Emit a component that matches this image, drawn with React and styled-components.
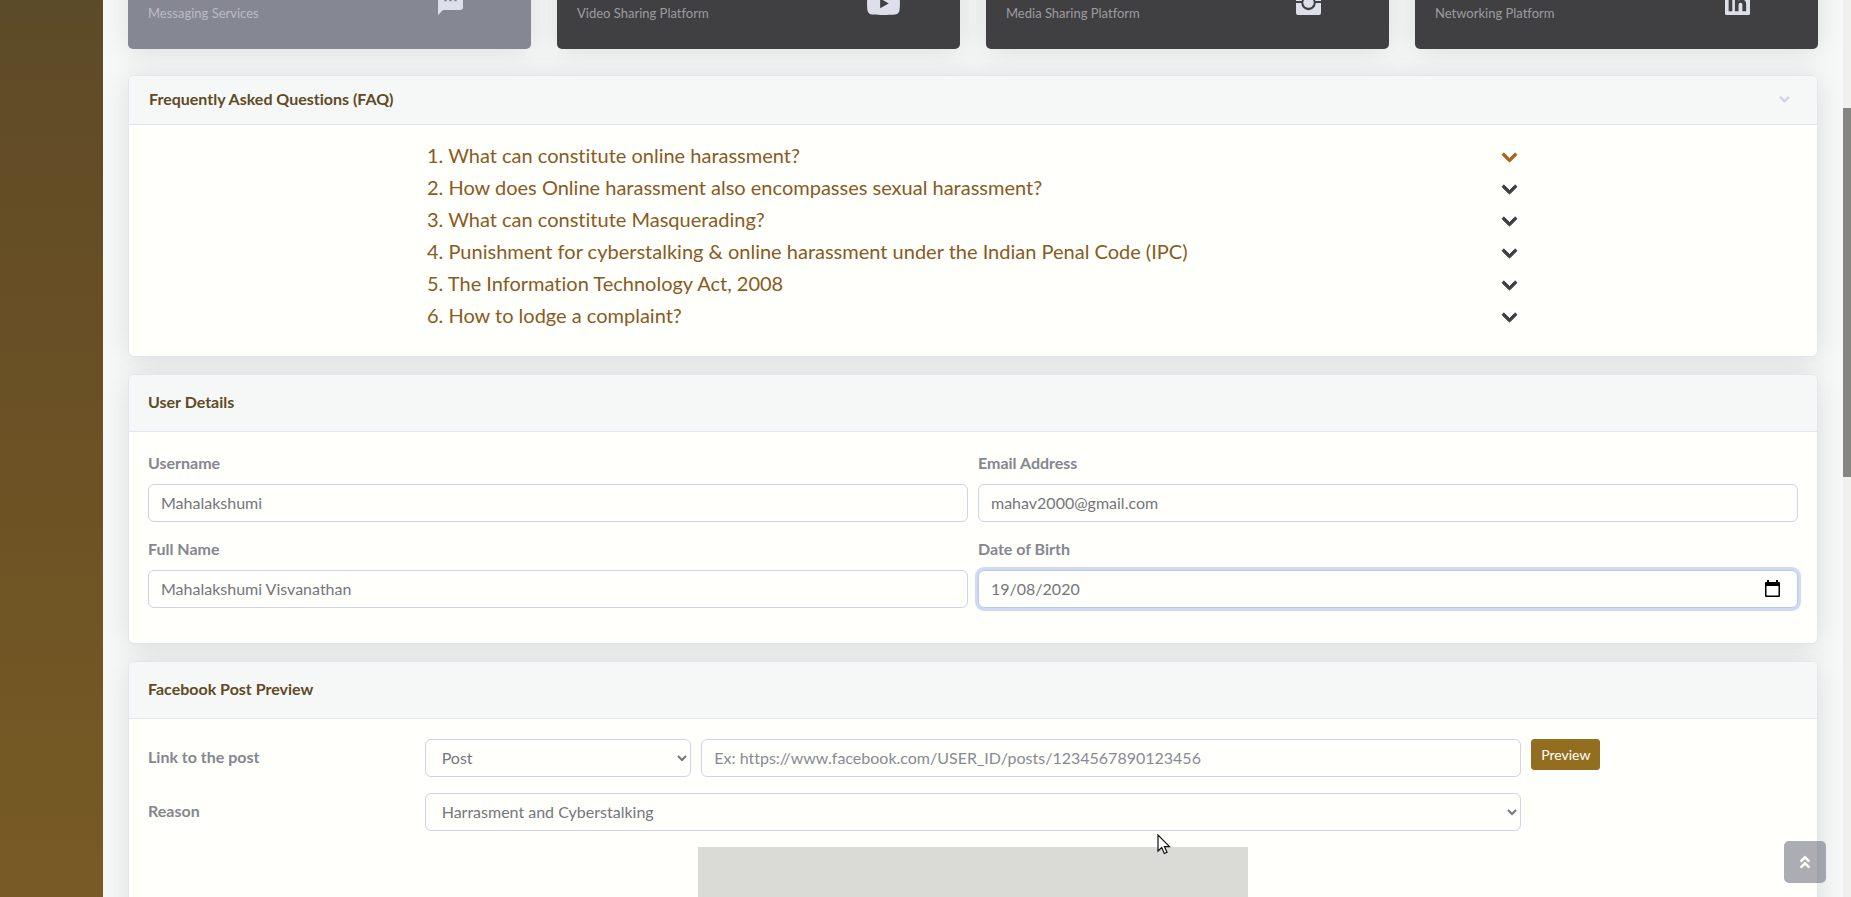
import React from "react";
import styled, { createGlobalStyle } from "styled-components";
import { FaChevronDown, FaAngleDoubleUp, FaYoutube } from "react-icons/fa";
import { MdSms } from "react-icons/md";

const GlobalStyle = createGlobalStyle`
  *, *::before, *::after { box-sizing: border-box; }
  body {
    margin: 0;
    overflow: hidden;
    background: #f7f9f9;
    font-family: Lato, "Liberation Sans", sans-serif;
    font-size: 16px;
    line-height: 24px;
    font-variant-ligatures: none;
    color: #858796;
  }
  button, input, select { font: inherit; }
`;

const Shell = styled.div`
  display: flex;
  height: 100vh;
  overflow: hidden;
`;

const Sidebar = styled.aside`
  flex: 0 0 103px;
  background: linear-gradient(180deg, #5c4b29 0%, #644c25 20%, #785b24 100%);
`;

const Main = styled.main`
  flex: 1;
  min-width: 0;
  padding: 0 25px;
  overflow: hidden;
`;

const Track = styled.div`
  flex: 0 0 8px;
  padding-top: 108px;
  background: #f0f0ec;
`;

const Thumb = styled.div`
  height: 369px;
  background: #868681;
`;

const shadow = "0 2px 28px rgba(58, 59, 62, 0.15)";

const Platforms = styled.section`
  display: grid;
  grid-template-columns: repeat(4, 1fr);
  gap: 26px;
  margin: -63px 0 26px;
`;

const Platform = styled.article`
  display: flex;
  align-items: flex-end;
  justify-content: space-between;
  height: 112px;
  padding: 0 57px 26px 20px;
  border-radius: 5px;
  color: #fffffb;
  background: ${(p) => (p.$muted ? "#858793" : "#404043")};
  box-shadow: ${shadow};
`;

const PlatformName = styled.h3`
  margin: 0;
  font-size: 22px;
  font-weight: 700;
  line-height: 32px;
`;

const PlatformNote = styled.p`
  margin: 0;
  font-size: 13px;
  line-height: 20px;
  color: ${(p) => (p.$muted ? "#bbbcc5" : "#9c9c9f")};
`;

const PlatformIcon = styled.span`
  display: flex;
  width: 36px;
  margin-bottom: 8px;
  color: #dddfeb;

  svg { flex: none; }
`;

const Card = styled.section`
  margin-bottom: 17px;
  border: 1px solid #e3e6f0;
  border-radius: 6px;
  background: #fffffb;
  box-shadow: ${shadow};
`;

const CardHeader = styled.header`
  display: flex;
  align-items: center;
  justify-content: space-between;
  height: ${(p) => (p.$compact ? "49px" : "57px")};
  padding: ${(p) => (p.$compact ? "0 27px 2px 20px" : "0 19px 3px")};
  border-bottom: 1px solid #e3e6f0;
  border-radius: 5px 5px 0 0;
  background: #f6f8f8;
`;

const Title = styled.h2`
  margin: 0;
  font-size: 16px;
  font-weight: 700;
  line-height: 24px;
  color: #5f4a24;
`;

const Toggle = styled.button`
  display: flex;
  padding: 0;
  border: 0;
  background: none;
  color: ${(p) => p.$color};

  path { stroke: currentColor; stroke-width: ${(p) => p.$weight || 0}; }
`;

const FaqList = styled.div`
  width: 1100px;
  max-width: 100%;
  margin: 0 auto;
  padding: 16px 0 23px;
`;

const FaqRow = styled.div`
  display: flex;
  align-items: center;
  justify-content: space-between;
  height: 32px;
  padding: 0 5px 0 4px;
`;

const Question = styled.a`
  padding-bottom: 3px;
  font-size: 20px;
  line-height: 29px;
  color: #8a5a24;
  text-decoration: none;
`;

const Form = styled.form`
  display: grid;
  grid-template-columns: repeat(${(p) => p.$columns}, 1fr);
  gap: 16px 10px;
  align-items: start;
  padding: 20px 19px ${(p) => p.$bottom}px;
`;

const Field = styled.div`
  position: relative;
  display: flex;
  flex-direction: column;
  gap: 8px;
`;

const Label = styled.label`
  grid-column: span 2;
  align-self: ${(p) => (p.$inline ? "center" : "auto")};
  padding-bottom: 2px;
  font-weight: 700;
  line-height: 22px;
  color: #85878f;
`;

const Input = styled.input`
  grid-column: span ${(p) => p.$span || 1};
  width: 100%;
  height: 38px;
  padding: 5px 12px 7px;
  border: 1px solid ${(p) => (p.$active ? "#bac8f3" : "#d1d3e2")};
  border-radius: 6px;
  outline: 0;
  background: #fffffb;
  color: #75767c;
  box-shadow: ${(p) => (p.$active ? "0 0 0 3px #d2daf3" : "none")};

  &::placeholder { color: #888a93; }
`;

const DateButton = styled.button`
  position: absolute;
  right: 18px;
  bottom: 11px;
  display: flex;
  padding: 0;
  border: 0;
  background: none;
  color: #000;
`;

const Select = styled.select`
  grid-column: span ${(p) => p.$span};
  width: 100%;
  height: 38px;
  padding: 5px 12px 7px;
  border: 1px solid #d1d3e2;
  border-radius: 6px;
  background: #fffffb;
  color: #75767c;
`;

const PreviewButton = styled.button`
  justify-self: start;
  width: 69px;
  height: 31px;
  padding: 0;
  border: 1px solid #946e20;
  border-radius: 3px;
  background: #946e20;
  color: #fffffb;
  font-size: 14px;
  line-height: 20px;
`;

const Reason = styled(Label)`
  grid-column: 1 / span 2;
`;

const Embed = styled.div`
  width: 550px;
  height: 240px;
  margin: 0 auto;
  background: #dadbd7;
`;

const ToTop = styled.a`
  position: fixed;
  right: 25px;
  bottom: 14px;
  display: flex;
  align-items: center;
  justify-content: center;
  width: 42px;
  height: 42px;
  border-radius: 5px;
  background: rgba(90, 92, 105, 0.5);
  color: #fffffb;
`;

const Pointer = styled.svg`
  position: fixed;
  left: 1157px;
  top: 834px;
`;

const InstagramMark = () => (
  <svg width="25" height="25" viewBox="0 0 25 25" fill="currentColor" aria-hidden="true">
    <path fillRule="evenodd" d="M2 0h21a2 2 0 0 1 2 2v9h-5.600a7.200 7.200 0 0 0-13.800 0H0V2a2 2 0 0 1 2-2zm16 3v4h4V3zM0 13h5.300a7.200 7.200 0 0 0 14.400 0H25v10a2 2 0 0 1-2 2H2a2 2 0 0 1-2-2z" />
    <circle cx="12.500" cy="12.500" r="5.200" />
  </svg>
);

const LinkedInMark = () => (
  <svg width="25" height="25" viewBox="1 1 24 24" fill="currentColor" aria-hidden="true">
    <path fillRule="evenodd" d="M2.500 1h21A1.500 1.500 0 0 1 25 2.500v21a1.500 1.500 0 0 1-1.500 1.500h-21A1.500 1.500 0 0 1 1 23.500v-21A1.500 1.500 0 0 1 2.500 1zM4.500 10v11.500H8V10zM6.300 4.500a2 2 0 1 0 0 4.100 2 2 0 0 0 0-4.100zM10.500 10v11.500H14v-6c0-3 3.700-3 3.700 0v6h3.600v-7c0-5-5.800-5.700-7.300-3V10z" />
  </svg>
);

const CalendarMark = () => (
  <svg width="15" height="17" viewBox="0 0 15 17" fill="currentColor" aria-hidden="true">
    <path fillRule="evenodd" d="M2 0h2v2h7V0h2v2h1a1 1 0 0 1 1 1v13a1 1 0 0 1-1 1H1a1 1 0 0 1-1-1V3a1 1 0 0 1 1-1h1zM1.500 6v9.500h12V6z" />
  </svg>
);

const platforms = [
  { note: "Messaging Services", icon: <MdSms size={25} viewBox="2 2 20 20" />, muted: true },
  { note: "Video Sharing Platform", icon: <FaYoutube size={33} viewBox="14 -99 548 548" /> },
  { name: "Instagram", note: "Media Sharing Platform", icon: <InstagramMark /> },
  { note: "Networking Platform", icon: <LinkedInMark /> },
];

const questions = [
  "1. What can constitute online harassment?",
  "2. How does Online harassment also encompasses sexual harassment?",
  "3. What can constitute Masquerading?",
  "4. Punishment for cyberstalking & online harassment under the Indian Penal Code (IPC)",
  "5. The Information Technology Act, 2008",
  "6. How to lodge a complaint?",
];

export default function App() {
  return (
    <>
      <GlobalStyle />
      <Shell>
        <Sidebar />
        <Main>
          <Platforms>
            {platforms.map((p) => (
              <Platform key={p.note} $muted={p.muted}>
                <div>
                  {p.name && <PlatformName>{p.name}</PlatformName>}
                  <PlatformNote $muted={p.muted}>{p.note}</PlatformNote>
                </div>
                <PlatformIcon>{p.icon}</PlatformIcon>
              </Platform>
            ))}
          </Platforms>

          <Card>
            <CardHeader $compact>
              <Title>Frequently Asked Questions (FAQ)</Title>
              <Toggle type="button" aria-label="Collapse questions" $color="#d1d3e2" $weight={40}>
                <FaChevronDown size={11} />
              </Toggle>
            </CardHeader>
            <FaqList>
              {questions.map((q, i) => (
                <FaqRow key={q}>
                  <Question href="#faq">{q}</Question>
                  <Toggle
                    type="button"
                    aria-label={`Show answer ${i + 1}`}
                    $color={i === 0 ? "#b0651d" : "#404043"}
                    $weight={30}
                  >
                    <FaChevronDown size={17} />
                  </Toggle>
                </FaqRow>
              ))}
            </FaqList>
          </Card>

          <Card>
            <CardHeader>
              <Title>User Details</Title>
            </CardHeader>
            <Form $columns={2} $bottom={35}>
              <Field>
                <Label htmlFor="username">Username</Label>
                <Input id="username" defaultValue="Mahalakshumi" />
              </Field>
              <Field>
                <Label htmlFor="email">Email Address</Label>
                <Input id="email" type="email" defaultValue="mahav2000@gmail.com" />
              </Field>
              <Field>
                <Label htmlFor="fullname">Full Name</Label>
                <Input id="fullname" defaultValue="Mahalakshumi Visvanathan" />
              </Field>
              <Field>
                <Label htmlFor="dob">Date of Birth</Label>
                <Input id="dob" inputMode="numeric" defaultValue="19/08/2020" $active />
                <DateButton type="button" aria-label="Choose date">
                  <CalendarMark />
                </DateButton>
              </Field>
            </Form>
          </Card>

          <Card>
            <CardHeader>
              <Title>Facebook Post Preview</Title>
            </CardHeader>
            <Form $columns={12} $bottom={16}>
              <Label htmlFor="link" $inline>Link to the post</Label>
              <Select $span={2} aria-label="Link type">
                <option>Post</option>
              </Select>
              <Input id="link" $span={6} placeholder="Ex: https://www.facebook.com/USER_ID/posts/1234567890123456" />
              <PreviewButton type="button">Preview</PreviewButton>
              <Reason htmlFor="reason" $inline>Reason</Reason>
              <Select id="reason" $span={8}>
                <option>Harrasment and Cyberstalking</option>
              </Select>
            </Form>
            <Embed />
          </Card>
        </Main>
        <Track>
          <Thumb />
        </Track>
      </Shell>
      <ToTop href="#top" aria-label="Back to top">
        <FaAngleDoubleUp size={16} />
      </ToTop>
      <Pointer width="14" height="21" viewBox="0 0 14 21" aria-hidden="true">
        <path d="M1 1v16l3.700-3.500 2.600 6 2.700-1.200-2.600-5.700H12.500z" fill="#fff" stroke="#111" strokeWidth="1.200" />
      </Pointer>
    </>
  );
}
